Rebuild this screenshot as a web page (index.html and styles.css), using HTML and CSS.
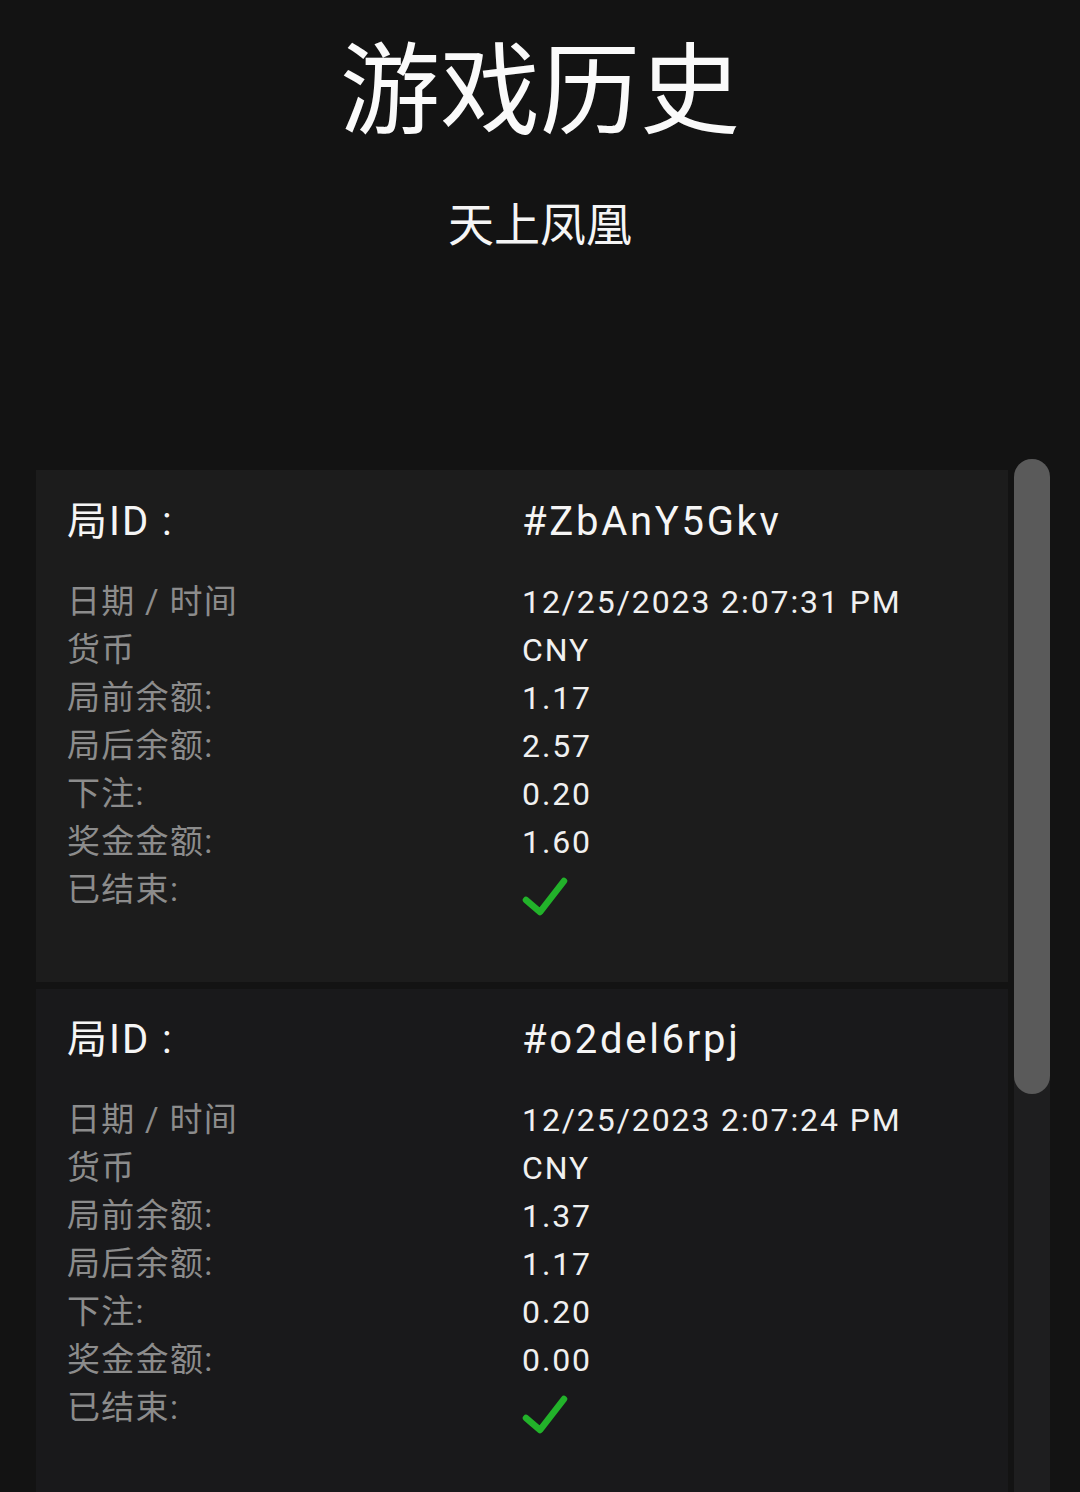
FILE: index.html
```html
<!DOCTYPE html>
<html lang="zh-CN">
<head>
    <meta charset="UTF-8" />
    <meta name="viewport" content="width=device-width, initial-scale=1.0" />
    <title>游戏历史</title>
    <link rel="stylesheet" href="styles.css">
</head>
<body>
    <header class="page-head">
        <h1>游戏历史</h1>
        <p class="game-name">天上凤凰</p>
    </header>

    <div class="history">
        <div class="history-list">
            <div class="round">
                <div class="round-id">
                    <span>局ID :</span>
                    <span class="round-id-value">#ZbAnY5Gkv</span>
                </div>
                <div class="round-rows">
                    <span class="label">日期 / 时间</span><span class="value">12/25/2023 2:07:31 PM</span>
                    <span class="label">货币</span><span class="value">CNY</span>
                    <span class="label">局前余额:</span><span class="value">1.17</span>
                    <span class="label">局后余额:</span><span class="value">2.57</span>
                    <span class="label">下注:</span><span class="value">0.20</span>
                    <span class="label">奖金金额:</span><span class="value">1.60</span>
                    <span class="label">已结束:</span>
                    <span class="value">
                        <svg class="check" width="50" height="40" viewBox="0 0 50 40">
                            <path d="M4 24 L18 36 L42 5" fill="none" stroke="#22b22a" stroke-width="6.5" stroke-linecap="round" stroke-linejoin="round" />
                        </svg>
                    </span>
                </div>
            </div>

            <div class="round round-alt">
                <div class="round-id">
                    <span>局ID :</span>
                    <span class="round-id-value">#o2del6rpj</span>
                </div>
                <div class="round-rows">
                    <span class="label">日期 / 时间</span><span class="value">12/25/2023 2:07:24 PM</span>
                    <span class="label">货币</span><span class="value">CNY</span>
                    <span class="label">局前余额:</span><span class="value">1.37</span>
                    <span class="label">局后余额:</span><span class="value">1.17</span>
                    <span class="label">下注:</span><span class="value">0.20</span>
                    <span class="label">奖金金额:</span><span class="value">0.00</span>
                    <span class="label">已结束:</span>
                    <span class="value">
                        <svg class="check" width="50" height="40" viewBox="0 0 50 40">
                            <path d="M4 24 L18 36 L42 5" fill="none" stroke="#22b22a" stroke-width="6.5" stroke-linecap="round" stroke-linejoin="round" />
                        </svg>
                    </span>
                </div>
            </div>
        </div>

        <div class="scroll-track">
            <div class="scroll-thumb"></div>
        </div>
    </div>
</body>
</html>
```

FILE: styles.css
```css
html, body {
    height: 100%;
}

body {
    margin: 0;
    background-color: #131313;
    color: #f2f2f2;
    font-family: Roboto, "Noto Sans CJK SC", sans-serif;
    overflow: hidden;
}

.page-head {
    text-align: center;
    padding-top: 32px;
}

.page-head h1 {
    margin: 0;
    font-size: 100px;
    line-height: 120px;
    font-weight: 400;
    color: #fafafa;
}

.game-name {
    margin: 45px 0 0;
    font-size: 46px;
    line-height: 56px;
    color: #f5f5f5;
}

.history {
    display: flex;
    gap: 6px;
    margin-top: 206px;
    padding-left: 36px;
}

.history-list {
    width: 972px;
    padding-top: 11px;
    display: flex;
    flex-direction: column;
    gap: 7px;
}

.round {
    background-color: #1c1c1c;
    padding: 28px 31px 66px;
}

.round-alt {
    background-color: #19191b;
    padding-top: 27px;
}

.round-id {
    display: grid;
    grid-template-columns: 1fr 1fr;
    font-size: 40px;
    line-height: 48px;
    color: #f5f5f5;
    letter-spacing: 2px;
}

.round-id-value {
    letter-spacing: 2.7px;
}

.round-rows {
    display: grid;
    grid-template-columns: 1fr 1fr;
    margin-top: 32px;
    line-height: 48px;
}

.label {
    font-size: 33px;
    color: #8c8c8c;
    letter-spacing: 1.3px;
}

.value {
    font-size: 32px;
    color: #f0f0f0;
    letter-spacing: 1.9px;
}

.check {
    display: block;
    margin-top: 10px;
}

.scroll-track {
    width: 36px;
    height: 1100px;
    background-color: #1e1e1f;
    border-radius: 18px 18px 0 0;
}

.scroll-thumb {
    height: 635px;
    background-color: #5a5a5a;
    border-radius: 18px;
}
```
